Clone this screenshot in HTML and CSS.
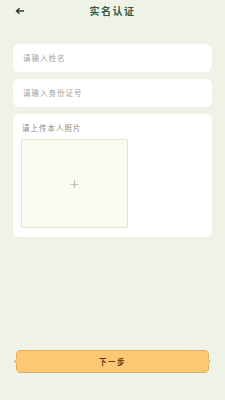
FILE: index.html
```html
<!DOCTYPE html>
<html>
<head>
<meta charset="utf-8">
<link rel="stylesheet" href="styles.css">
</head>
<body>
<div class="page">
  <div class="header">
    <svg class="back" width="10" height="8" viewBox="0 0 10 8"><path d="M9 4H2M4.5 1.2L1.5 4l3 2.8" fill="none" stroke="#2b3a30" stroke-width="1.4"/></svg>
    <div class="title">实名认证</div>
  </div>
  <div class="form">
    <div class="card input">请输入姓名</div>
    <div class="card input">请输入身份证号</div>
    <div class="card upload-card">
      <div class="label">请上传本人照片</div>
      <div class="upload"><span class="plus">+</span></div>
    </div>
  </div>
  <div class="spacer"></div>
  <div class="btn-wrap">
    <div class="btn">
      <svg class="btn-bg" viewBox="0 0 196 23" preserveAspectRatio="none"><path d="M5 0.5H191L193.5 3V9.5L195.5 11.5L193.5 13.5V20L191 22.5H5L2.5 20V13.5L0.5 11.5L2.5 9.5V3Z" fill="#fdc873" stroke="#d9a253" stroke-width="0.8"/></svg>
      <span class="btn-text">下一步</span>
    </div>
  </div>
</div>
</body>
</html>
```
FILE: styles.css
```css
html, body {
  margin: 0;
  padding: 0;
}
body {
  width: 225px;
  height: 400px;
  background: #eff2e7;
  font-family: "Noto Sans CJK SC", "Noto Sans", sans-serif;
  overflow: hidden;
}
.page {
  height: 400px;
  display: flex;
  flex-direction: column;
}
.header {
  height: 22px;
  display: flex;
  align-items: center;
  justify-content: center;
  position: relative;
}
.back {
  position: absolute;
  left: 15px;
  top: 7px;
}
.title {
  font-size: 10px;
  font-weight: 700;
  color: #2f5a42;
  letter-spacing: 1.5px;
  line-height: 22px;
}
.form {
  padding: 22px 13px 0 13px;
  display: flex;
  flex-direction: column;
  gap: 7px;
}
.card {
  background: #fff;
  border-radius: 6px;
}
.input {
  height: 28px;
  line-height: 28px;
  padding-left: 10px;
  font-size: 7.5px;
  color: #a2a2a2;
  letter-spacing: 1px;
}
.upload-card {
  padding: 8px 8px 10px 8px;
  height: 105px;
}
.label {
  font-size: 7.5px;
  color: #8a8a8a;
  letter-spacing: 1px;
  line-height: 12px;
  padding-left: 1px;
}
.upload {
  margin-top: 5px;
  width: 105px;
  height: 87px;
  background: #fbfcf1;
  border: 1px solid #e6e3c7;
  border-radius: 2px;
  display: flex;
  align-items: center;
  justify-content: center;
}
.plus {
  font-size: 13px;
  color: #a0a08e;
  font-weight: 300;
  line-height: 1;
  font-family: "DejaVu Sans", sans-serif;
}
.spacer {
  flex: 1;
}
.btn-wrap {
  padding: 0 14px 27px 14px;
}
.btn {
  position: relative;
  height: 23px;
  display: flex;
  align-items: center;
  justify-content: center;
}
.btn-bg {
  position: absolute;
  left: 0;
  top: 0;
  width: 100%;
  height: 100%;
}
.btn-text {
  position: relative;
  font-size: 7.5px;
  font-weight: 700;
  color: #5a3a12;
  letter-spacing: 1.5px;
}
```
